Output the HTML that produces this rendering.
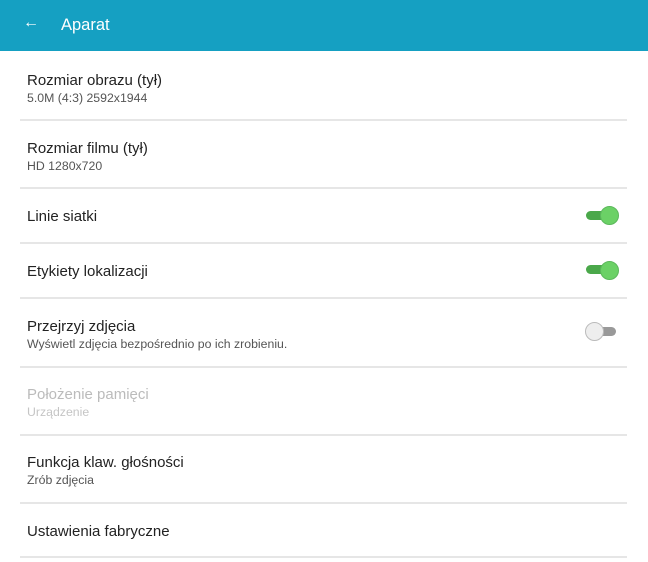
<!DOCTYPE html><html><head><style>
body{margin:0;width:648px;height:562px;background:#fff;font-family:"Liberation Sans",sans-serif;position:relative;overflow:hidden}
.hd{position:absolute;left:0;top:0;width:648px;height:51px;background:#15a0c2;color:#fff}
.hd .t{position:absolute;left:61px;top:16px;font-size:16.5px}
.hd .a{position:absolute;left:23px;top:14px;font-size:16px}
.it{position:absolute;left:27px;font-size:15px;color:#222}
.sub{position:absolute;left:27px;font-size:12.3px;color:#555}
.ln{position:absolute;left:20px;width:607px;height:2px;background:#e6e6e6}
.tr{position:absolute;left:586px;width:28px;height:9px;border-radius:5px}
.th{position:absolute;width:17px;height:17px;border-radius:50%}
</style></head><body>
<div class="hd"><span class="a">←</span><span class="t">Aparat</span></div>
<div class="it" style="top:72px">Rozmiar obrazu (tył)</div><div class="sub" style="top:91px">5.0M (4:3) 2592x1944</div>
<div class="ln" style="top:119px"></div>
<div class="it" style="top:140px">Rozmiar filmu (tył)</div><div class="sub" style="top:159px">HD 1280x720</div>
<div class="ln" style="top:187px"></div>
<div class="it" style="top:208px">Linie siatki</div>
<div class="tr" style="top:211px;background:#4aa84a"></div><div class="th" style="left:600px;top:206px;background:#6bd166;border:1px solid #5cb85c"></div>
<div class="ln" style="top:242px"></div>
<div class="it" style="top:263px">Etykiety lokalizacji</div>
<div class="tr" style="top:265px;background:#4aa84a"></div><div class="th" style="left:600px;top:261px;background:#6bd166;border:1px solid #5cb85c"></div>
<div class="ln" style="top:297px"></div>
<div class="it" style="top:318px">Przejrzyj zdjęcia</div><div class="sub" style="top:337px">Wyświetl zdjęcia bezpośrednio po ich zrobieniu.</div>
<div class="tr" style="top:327px;background:#999;left:590px;width:26px"></div><div class="th" style="left:585px;top:322px;background:#eee;border:1px solid #bbb"></div>
<div class="ln" style="top:366px"></div>
<div class="it" style="top:386px;color:#bbb">Położenie pamięci</div><div class="sub" style="top:405px;color:#c5c5c5">Urządzenie</div>
<div class="ln" style="top:434px"></div>
<div class="it" style="top:454px">Funkcja klaw. głośności</div><div class="sub" style="top:473px">Zrób zdjęcia</div>
<div class="ln" style="top:502px"></div>
<div class="it" style="top:523px">Ustawienia fabryczne</div>
<div class="ln" style="top:556px"></div>
</body></html>
